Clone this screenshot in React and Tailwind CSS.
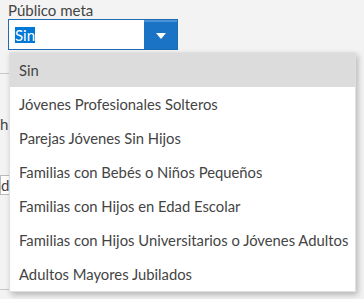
const options = [
  "Sin",
  "Jóvenes Profesionales Solteros",
  "Parejas Jóvenes Sin Hijos",
  "Familias con Bebés o Niños Pequeños",
  "Familias con Hijos en Edad Escolar",
  "Familias con Hijos Universitarios o Jóvenes Adultos",
  "Adultos Mayores Jubilados",
];

export default function App() {
  return (
    <div className="relative w-[364px] h-[299px] overflow-hidden bg-[#f3f3f3] text-[#444] font-['Lato',sans-serif]">
      {/* form behind the open menu */}
      <div className="flex flex-col">
        <div className="px-2 pt-[2px]">
          <label className="block text-[15px] leading-[17px]">Público meta</label>
          <div className="flex w-[170px] h-[31px] border border-[#1f6cb5] bg-white">
            <div className="flex-1 flex items-center pl-[6px]">
              <span className="bg-[#0078d7] text-white text-[15px] leading-[16px]">Sin</span>
            </div>
            <div className="w-[33px] h-full bg-[#1a73c4] border-t-2 border-[#4a93d6] flex items-center justify-center">
              <svg width="10" height="6" viewBox="0 0 10 6">
                <path d="M0 0h10L5 6z" fill="#fff" />
              </svg>
            </div>
          </div>
        </div>
        <div className="mt-[23px] w-[10px] border-t border-[#c8c8c8]" />
        <div className="mt-[41px] text-[15px] leading-[18px]">h</div>
        <div className="mt-[42px] w-[10px] h-[20px] border border-[#bbb] bg-white text-[15px] leading-[18px]">d</div>
        <div className="mt-[94px] w-[184px] border-t border-[#c8c8c8]" />
      </div>

      {/* open dropdown */}
      <ul className="absolute left-[9px] top-[52px] w-[347px] bg-white border border-[#e0e0e0] shadow-[2px_3px_6px_rgba(0,0,0,0.25)]">
        {options.map((o, i) => (
          <li
            key={o}
            className={
              "h-[34px] flex items-center pl-[9px] text-[14.8px] " +
              (i === 0 ? "bg-[#dcdcdc]" : "")
            }
          >
            {o}
          </li>
        ))}
      </ul>
    </div>
  );
}
